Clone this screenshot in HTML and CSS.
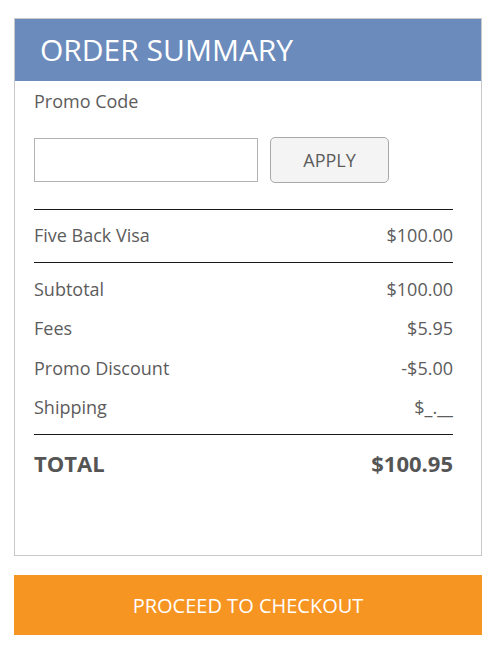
FILE: index.html
```html
<!DOCTYPE html>
<html lang="en">
<head>
<meta charset="utf-8">
<title>Order Summary</title>
<link rel="stylesheet" href="styles.css">
</head>
<body>
<div class="page">
  <section class="card">
    <header class="card-header">ORDER SUMMARY</header>
    <div class="card-body">
      <div class="promo-label">Promo Code</div>
      <div class="promo-form">
        <input class="promo-input" type="text" aria-label="Promo Code">
        <button class="apply-btn" type="button">APPLY</button>
      </div>
      <div class="item-row">
        <span>Five Back Visa</span>
        <span>$100.00</span>
      </div>
      <div class="rows">
        <div class="row"><span>Subtotal</span><span>$100.00</span></div>
        <div class="row"><span>Fees</span><span>$5.95</span></div>
        <div class="row"><span>Promo Discount</span><span>-$5.00</span></div>
        <div class="row"><span>Shipping</span><span>$_.__</span></div>
      </div>
      <div class="total-row">
        <span>TOTAL</span>
        <span>$100.95</span>
      </div>
    </div>
  </section>
  <button class="checkout-btn" type="button">PROCEED TO CHECKOUT</button>
</div>
</body>
</html>
```
FILE: styles.css
```css
* { box-sizing: border-box; }

html, body {
  margin: 0;
  padding: 0;
  background: #ffffff;
}

body {
  font-family: "Open Sans", "Liberation Sans", Arial, sans-serif;
  color: #5c5c5c;
}

.page {
  padding: 18px 14px 0;
  width: 496px;
}

.card {
  width: 468px;
  border: 1px solid #c8c8c8;
  background: #fff;
}

.card-header {
  height: 62px;
  line-height: 62px;
  padding: 0 25px;
  background: #6b8bbc;
  color: #ffffff;
  font-size: 30px;
  font-weight: 400;
}

.card-body {
  padding: 8px 28px 78px 19px;
}

.promo-label {
  font-size: 18px;
  line-height: 24px;
}

.promo-form {
  margin-top: 24px;
  height: 46px;
  display: flex;
  align-items: center;
  gap: 12px;
}

.promo-input {
  width: 224px;
  height: 44px;
  border: 1px solid #b3b3b3;
  border-radius: 0;
  padding: 0 10px;
  font-family: inherit;
  font-size: 18px;
  outline: none;
}

.apply-btn {
  width: 119px;
  height: 46px;
  border: 1px solid #a8a8a8;
  border-radius: 5px;
  background: #f4f4f4;
  color: #5c5c5c;
  font-family: inherit;
  font-size: 18px;
  padding: 0;
}

.item-row {
  margin-top: 26px;
  border-top: 1px solid #1a1a1a;
  border-bottom: 1px solid #1a1a1a;
  padding: 13px 0 15px;
  display: flex;
  justify-content: space-between;
  font-size: 18px;
  line-height: 24px;
}

.rows {
  padding: 6px 0 7px;
  border-bottom: 1px solid #1a1a1a;
}

.row {
  height: 39.5px;
  display: flex;
  justify-content: space-between;
  align-items: center;
  font-size: 18px;
  line-height: 24px;
}

.total-row {
  padding-top: 14px;
  display: flex;
  justify-content: space-between;
  font-size: 22px;
  line-height: 28px;
  font-weight: 700;
  color: #555555;
}

.checkout-btn {
  display: block;
  margin-top: 19px;
  width: 468px;
  height: 60px;
  border: none;
  background: #f79522;
  color: #ffffff;
  font-family: inherit;
  font-size: 20px;
  padding: 0;
}
```
